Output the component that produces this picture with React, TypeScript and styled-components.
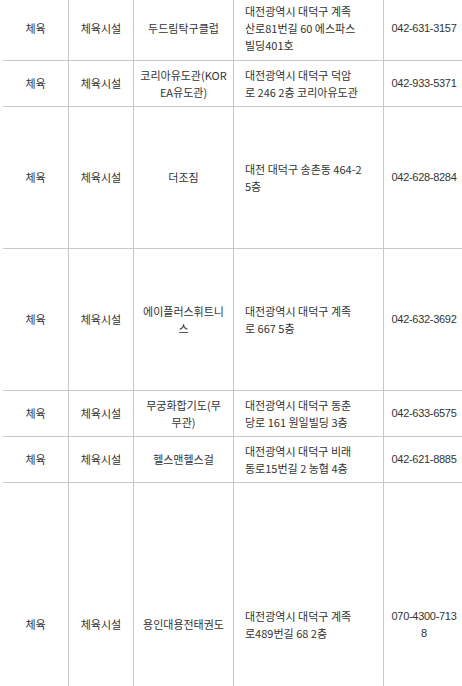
import React from 'react';
import styled, { createGlobalStyle, css } from 'styled-components';

const GlobalStyle = createGlobalStyle`
  html, body {
    margin: 0;
    padding: 0;
    background: #fff;
    overflow: hidden;
  }
`;

const Table = styled.table`
  margin: -3px 0 0 3px;
  width: 461px;
  table-layout: fixed;
  border-collapse: separate;
  border-spacing: 0;
  font-family: 'Noto Sans CJK KR', 'Noto Sans', sans-serif;
  font-size: 11px;
  line-height: 17px;
  color: #333;
`;

const Col = styled.col<{ $w: number }>`
  width: ${(p) => p.$w}px;
`;

const Row = styled.tr<{ $h: number }>`
  height: ${(p) => p.$h}px;
`;

type Kind = 'center' | 'addr' | 'tel';

const Cell = styled.td<{ $kind?: Kind }>`
  box-sizing: border-box;
  padding: 0 6px;
  text-align: center;
  vertical-align: middle;
  word-break: break-all;
  border-bottom: 1px solid #c8c8c8;
  border-right: 1px solid #c8c8c8;

  ${(p) =>
    p.$kind === 'addr' &&
    css`
      padding: 0 8px 0 11px;
      text-align: left;
    `}

  ${(p) =>
    p.$kind === 'tel' &&
    css`
      padding: 0 6px;
      border-right: none;
      font-family: 'Liberation Sans', 'Noto Sans CJK KR', sans-serif;
      letter-spacing: -0.3px;
    `}
`;

// lines as they are broken in the listing
const Line = styled.span`
  display: block;
  white-space: nowrap;
`;

type Place = {
  name: string[];
  addr: string[];
  tel: string;
  h: number;
};

const places: Place[] = [
  { name: ['두드림탁구클럽'], addr: ['대전광역시 대덕구 계족', '산로81번길 60 에스파스', '빌딩401호'], tel: '042-631-3157', h: 64 },
  { name: ['코리아유도관(KOR', 'EA유도관)'], addr: ['대전광역시 대덕구 덕암', '로 246 2층 코리아유도관'], tel: '042-933-5371', h: 46 },
  { name: ['더조짐'], addr: ['대전 대덕구 송촌동 464-2', '5층'], tel: '042-628-8284', h: 142 },
  { name: ['에이플러스휘트니', '스'], addr: ['대전광역시 대덕구 계족', '로 667 5층'], tel: '042-632-3692', h: 142 },
  { name: ['무궁화합기도(무', '무관)'], addr: ['대전광역시 대덕구 동춘', '당로 161 원일빌딩 3층'], tel: '042-633-6575', h: 46 },
  { name: ['헬스맨헬스걸'], addr: ['대전광역시 대덕구 비래', '동로15번길 2 농협 4층'], tel: '042-621-8885', h: 46 },
  { name: ['용인대용전태권도'], addr: ['대전광역시 대덕구 계족', '로489번길 68 2층'], tel: '070-4300-7138', h: 284 },
];

export default function App() {
  return (
    <>
      <GlobalStyle />
      <Table>
        <colgroup>
          <Col $w={66} />
          <Col $w={65} />
          <Col $w={100} />
          <Col $w={150} />
          <Col $w={80} />
        </colgroup>
        <tbody>
          {places.map((p) => (
            <Row key={p.name.join('')} $h={p.h}>
              <Cell>체육</Cell>
              <Cell>체육시설</Cell>
              <Cell>
                {p.name.map((line) => (
                  <Line key={line}>{line}</Line>
                ))}
              </Cell>
              <Cell $kind="addr">
                {p.addr.map((line) => (
                  <Line key={line}>{line}</Line>
                ))}
              </Cell>
              <Cell $kind="tel">{p.tel}</Cell>
            </Row>
          ))}
        </tbody>
      </Table>
    </>
  );
}
